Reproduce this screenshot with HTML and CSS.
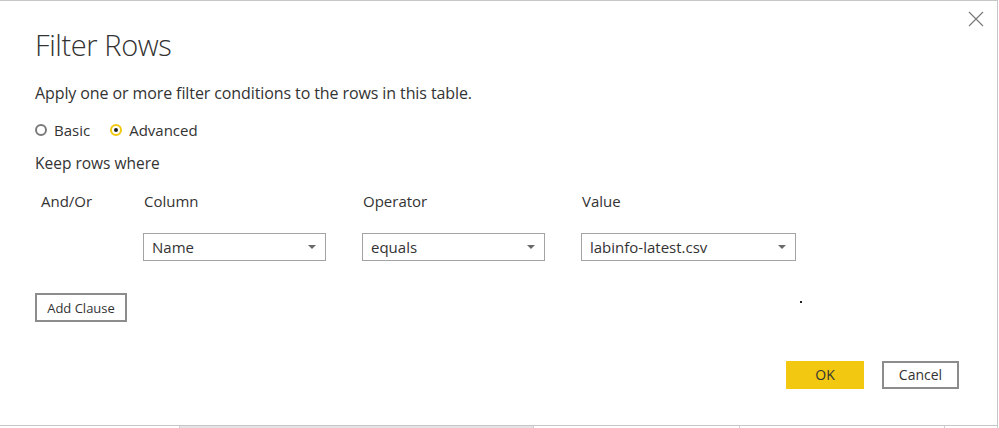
FILE: index.html
```html
<!DOCTYPE html>
<html lang="en">
<head>
<meta charset="utf-8">
<title>Filter Rows</title>
<link rel="stylesheet" href="styles.css">
</head>
<body>
<div class="dialog">
  <button class="close" aria-label="Close">
    <svg width="16" height="16" viewBox="0 0 16 16"><path d="M1 1 L15 15 M15 1 L1 15" stroke="#7a7a7a" stroke-width="1.2" fill="none"/></svg>
  </button>
  <h1 class="title">Filter Rows</h1>
  <p class="subtitle">Apply one or more filter conditions to the rows in this table.</p>
  <div class="radios">
    <label class="radio"><span class="ring"></span>Basic</label>
    <label class="radio checked"><span class="ring"><span class="dot"></span></span>Advanced</label>
  </div>
  <p class="keep">Keep rows where</p>
  <div class="grid">
    <div class="hdr first">And/Or</div>
    <div class="hdr">Column</div>
    <div class="hdr">Operator</div>
    <div class="hdr">Value</div>
    <div></div>
    <div class="select"><span>Name</span><span class="arrow"></span></div>
    <div class="select"><span>equals</span><span class="arrow"></span></div>
    <div class="select"><span>labinfo-latest.csv</span><span class="arrow"></span></div>
  </div>
  <div class="addrow"><button class="btn add">Add Clause</button></div>
  <div class="footer">
    <button class="btn ok">OK</button>
    <button class="btn cancel">Cancel</button>
  </div>
  <span class="speck"></span>
</div>
<div class="under">
  <div class="u1"></div>
  <div class="u2"></div>
  <div class="u3"></div>
  <div class="u4"></div>
  <div class="u5"></div>
</div>
</body>
</html>
```

FILE: styles.css
```css
* { box-sizing: border-box; }
html, body { margin: 0; padding: 0; background: #fff; }
body {
  width: 999px;
  height: 428px;
  overflow: hidden;
  font-family: "Open Sans", "Noto Sans", sans-serif;
  color: #333;
}
.dialog {
  position: relative;
  width: 998px;
  height: 426px;
  border-top: 1px solid #c6c6c6;
  border-right: 1px solid #c6c6c6;
  border-bottom: 1px solid #c6c6c6;
  padding: 24px 38px 0 35px;
  display: flex;
  flex-direction: column;
}
.close {
  position: absolute;
  top: 9px;
  right: 12px;
  width: 18px;
  height: 18px;
  padding: 1px;
  border: 0;
  background: transparent;
}
.title {
  margin: 0;
  font-size: 29px;
  font-weight: 300;
  letter-spacing: -0.4px;
  line-height: 40px;
  color: #333;
}
.subtitle {
  margin: 17px 0 0;
  font-size: 16px;
  line-height: 22px;
  letter-spacing: -0.1px;
}
.radios {
  margin-top: 16px;
  display: flex;
  gap: 20px;
  font-size: 15px;
  line-height: 20px;
}
.radio {
  display: flex;
  align-items: center;
  gap: 7px;
}
.ring {
  width: 12px;
  height: 12px;
  border-radius: 50%;
  border: 2px solid #7a7a7a;
  display: flex;
  align-items: center;
  justify-content: center;
}
.checked .ring {
  border: 2.5px solid #f2c811;
}
.dot {
  width: 4px;
  height: 4px;
  border-radius: 50%;
  background: #222;
}
.keep {
  margin: 13px 0 0;
  font-size: 15.5px;
  line-height: 20px;
}
.grid {
  margin-top: 18px;
  display: grid;
  grid-template-columns: 72px 183px 183px 215px;
  column-gap: 36px;
  row-gap: 22px;
  font-size: 15px;
}
.hdr {
  line-height: 20px;
  padding-left: 1px;
}
.hdr.first { padding-left: 6px; }
.select {
  height: 28px;
  border: 1px solid #a3a3a3;
  display: flex;
  align-items: center;
  justify-content: space-between;
  padding: 0 9px 0 8px;
  line-height: 20px;
}
.arrow {
  width: 0;
  height: 0;
  border-left: 4px solid transparent;
  border-right: 4px solid transparent;
  border-top: 4px solid #6a6a6a;
}
.addrow {
  margin-top: 32px;
  display: flex;
}
.btn {
  font-family: inherit;
  color: #333;
  background: #fff;
  padding: 0;
  line-height: 20px;
}
.add {
  width: 92px;
  height: 29px;
  font-size: 13px;
  border: 2px solid #8c8c8c;
}
.footer {
  margin-top: 39px;
  display: flex;
  justify-content: flex-end;
  gap: 18px;
}
.ok {
  width: 78px;
  height: 28px;
  font-size: 14px;
  border: 0;
  background: #f2c811;
}
.cancel {
  width: 77px;
  height: 28px;
  font-size: 14px;
  border: 2px solid #8c8c8c;
}
.speck {
  position: absolute;
  left: 800px;
  top: 300px;
  width: 2px;
  height: 2px;
  background: #222;
}
.under {
  display: flex;
  height: 2px;
}
.under > div { height: 2px; border-right: 1px solid #cfcfcf; }
.u1 { width: 180px; }
.u2 { width: 354px; background: #e4e4e4; }
.u3 { width: 206px; }
.u4 { width: 205px; }
.u5 { width: 53px; border-right: 0; }
```
